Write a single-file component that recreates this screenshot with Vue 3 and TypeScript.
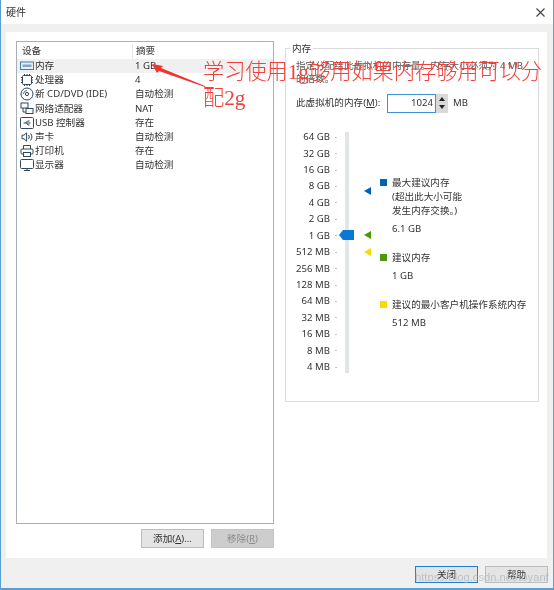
<script setup lang="ts">
interface Device { name: string; summary: string; icon: string; selected?: boolean }
const devices: Device[] = [
  { name: '内存', summary: '1 GB', icon: 'mem', selected: true },
  { name: '处理器', summary: '4', icon: 'cpu' },
  { name: '新 CD/DVD (IDE)', summary: '自动检测', icon: 'cd' },
  { name: '网络适配器', summary: 'NAT', icon: 'net' },
  { name: 'USB 控制器', summary: '存在', icon: 'usb' },
  { name: '声卡', summary: '自动检测', icon: 'snd' },
  { name: '打印机', summary: '存在', icon: 'prn' },
  { name: '显示器', summary: '自动检测', icon: 'mon' },
]
const scale: string[] = ['64 GB','32 GB','16 GB','8 GB','4 GB','2 GB','1 GB','512 MB','256 MB','128 MB','64 MB','32 MB','16 MB','8 MB','4 MB']
</script>

<template>
  <div class="win">
    <header class="title">
      <span>硬件</span>
      <svg class="close" viewBox="0 0 9 9" width="9" height="9"><path d="M.5.5l8 8M8.5.5l-8 8" stroke="#444" stroke-width="1.1" fill="none"/></svg>
    </header>
    <div class="sheet">
      <section class="list">
        <div class="row head"><span class="c1">设备</span><span class="c2">摘要</span></div>
        <div v-for="d in devices" :key="d.name" class="row" :class="{ sel: d.selected }">
          <span class="c1">
            <svg class="ic" viewBox="0 0 14 14" fill="none" stroke="#2f4a5e" stroke-width="1">
              <g v-if="d.icon === 'mem'"><rect x="0.5" y="3" width="13" height="7.5" stroke="#3f7fa8" fill="#e4eef5"/><path d="M2.5 5.5h9v2.5h-9z" fill="#7fa9c6" stroke="none"/></g>
              <g v-else-if="d.icon === 'cpu'"><rect x="2.5" y="2.5" width="9" height="9" rx="1"/><path d="M1 4.5h1.5M1 7h1.5M1 9.5h1.5M11.5 4.5H13M11.5 7H13M11.5 9.5H13M4.5 1v1.5M7 1v1.5M9.5 1v1.5M4.5 11.5V13M7 11.5V13M9.5 11.5V13"/></g>
              <g v-else-if="d.icon === 'cd'"><circle cx="7" cy="7" r="6"/><circle cx="7" cy="7" r="1.6"/><path d="M3.5 7a3.5 3.5 0 0 1 3.5-3.5" stroke-width=".8"/></g>
              <g v-else-if="d.icon === 'net'"><rect x="1" y="1" width="7" height="5"/><rect x="6" y="6.5" width="7" height="5"/><path d="M3 6v4h3"/></g>
              <g v-else-if="d.icon === 'usb'"><rect x="0.5" y="1.5" width="13" height="11" rx="1"/><path d="M3.5 7h7M5.5 7l2-2h2M6.5 7l1.5 2h1.5"/></g>
              <g v-else-if="d.icon === 'snd'"><path d="M2 5.2h2l2.6-2.4v8.4L4 8.8H2z"/><path d="M8.5 5a3 3 0 0 1 0 4M10.5 3.5a5 5 0 0 1 0 7"/></g>
              <g v-else-if="d.icon === 'prn'"><path d="M3.5 5V1.5h7V5"/><rect x="1" y="5" width="12" height="5" rx="1"/><rect x="3.5" y="8.5" width="7" height="4" fill="#fff"/></g>
              <g v-else><rect x="0.5" y="1.5" width="13" height="9" rx="1"/><path d="M4 12.5h6M7 10.5v2"/></g>
            </svg>
            <span>{{ d.name }}</span>
          </span>
          <span class="c2">{{ d.summary }}</span>
        </div>
        <div class="list-actions">
          <button class="btn">添加(<u>A</u>)...</button>
          <button class="btn off">移除(<u>R</u>)</button>
        </div>
      </section>

      <section class="group">
        <h3 class="legend-title">内存</h3>
        <p class="desc">指定分配给此虚拟机的内存量。内存大小必须为 4 MB<br>的倍数。</p>
        <div class="mem-line">
          <label>此虚拟机的内存(<u>M</u>):</label>
          <div class="spin">
            <span class="val">1024</span>
            <span class="arrows"><i class="up"></i><i class="down"></i></span>
          </div>
          <span>MB</span>
        </div>
        <div class="slider-area">
          <div class="scale">
            <div v-for="s in scale" :key="s" class="tick"><span>{{ s }}</span><b></b></div>
          </div>
          <div class="track">
            <svg class="thumb" viewBox="0 0 15 10"><path d="M0 5 4 0h11v10H4z" fill="#0a78d7"/></svg>
            <i class="tri blue"></i>
            <i class="tri green"></i>
            <i class="tri yellow"></i>
          </div>
          <div class="keys">
            <div class="key k1">
              <div class="key-t"><i class="sq s-blue"></i>最大建议内存</div>
              <div class="key-n">(超出此大小可能<br>发生内存交换。)</div>
              <div class="key-v">6.1 GB</div>
            </div>
            <div class="key k2">
              <div class="key-t"><i class="sq s-green"></i>建议内存</div>
              <div class="key-v">1 GB</div>
            </div>
            <div class="key k3">
              <div class="key-t"><i class="sq s-yellow"></i>建议的最小客户机操作系统内存</div>
              <div class="key-v">512 MB</div>
            </div>
          </div>
        </div>
      </section>
    </div>
    <footer class="foot">
      <button class="btn primary">关闭</button>
      <button class="btn">帮助</button>
    </footer>

    <svg class="arrow" viewBox="0 0 60 30" width="60" height="30">
      <path d="M4 3 15 5 13 7 57 25 57 26 11 10 9 12Z" fill="#f0332e"/>
    </svg>
    <div class="note">学习使用1g够用如果内存够用可以分配2g</div>
    <div class="mark">https://blog.csdn.net/toyanf</div>
  </div>
</template>

<style>
html, body { margin: 0; background: #fff; }
</style>

<style scoped>
.win {
  position: relative;
  box-sizing: border-box;
  width: 554px;
  height: 590px;
  overflow: hidden;
  display: flex;
  flex-direction: column;
  background: #f0f0f0;
  border: 1px solid #5a9fd4;
  border-top: 0;
  border-bottom-width: 2px;
  font: 9.6px/14px "Noto Sans", "Noto Sans CJK SC", sans-serif;
  color: #333;
  filter: blur(0.35px);
}
.title {
  height: 24px;
  line-height: 24px;
  background: #fff;
  padding: 0 8px 0 5px;
  font-size: 10px;
  flex: none;
  display: flex;
  justify-content: space-between;
  align-items: center;
}
.sheet {
  flex: none;
  height: 526px;
  margin: 8px 6px 0 5px;
  box-sizing: border-box;
  background: #fff;
  padding: 9px 10px 0 10px;
  display: flex;
  align-items: flex-start;
}
.list {
  position: relative;
  box-sizing: border-box;
  width: 258px;
  height: 483px;
  border: 1px solid #a9b0b5;
  padding-top: 1px;
  flex: none;
}
.row { display: flex; height: 14.2px; line-height: 14px; align-items: center; }
.row.head { height: 16px; color: #333; }
.row.sel { background: #f0f0f0; }
.c1 { width: 112px; padding-left: 3px; display: flex; align-items: center; gap: 1px; white-space: nowrap; flex: none; }
.head .c1 { padding-left: 5px; width: 110px; border-right: 1px solid #e8e8e8; height: 15px; }
.c2 { padding-left: 3px; }
.ic { width: 14px; height: 14px; flex: none; }
.list-actions {
  position: absolute;
  top: 487px;
  right: -1px;
  display: flex;
  gap: 7px;
}
.btn {
  box-sizing: border-box;
  width: 63px;
  height: 19px;
  padding: 0;
  border: 1px solid #bdbdbd;
  background: #e4e4e4;
  font: inherit;
  color: #333;
}
.btn.off { background: #cdcdcd; color: #8b8b8b; border-color: #c4c4c4; }
.btn.primary { border: 1px solid #1f7fd0; }
.group {
  position: relative;
  box-sizing: border-box;
  width: 254px;
  height: 354px;
  margin: 7px 0 0 11px;
  border: 1px solid #dcdcdc;
  padding: 10px 10px 0;
  flex: none;
}
.legend-title {
  position: absolute;
  top: -7px;
  left: 4px;
  margin: 0;
  padding: 0 2px;
  background: #fff;
  font: inherit;
}
.desc { margin: 0; line-height: 13px; color: #555; }
.mem-line { display: flex; align-items: center; margin-top: 8px; height: 20px; }
.mem-line label { width: 91px; flex: none; }
.spin { display: flex; width: 61px; height: 19px; margin-right: 5px; }
.val {
  box-sizing: border-box;
  width: 49px;
  border: 1px solid #3d93d6;
  text-align: right;
  padding-right: 2px;
  line-height: 16px;
}
.arrows { width: 12px; display: flex; flex-direction: column; background: #d9d9d9; align-items: center; justify-content: space-around; padding: 2px 0; box-sizing: border-box; }
.arrows i { width: 0; height: 0; border-left: 3px solid transparent; border-right: 3px solid transparent; }
.up { border-bottom: 4px solid #222; }
.down { border-top: 4px solid #222; }
.slider-area { display: flex; margin-top: 16px; }
.scale { width: 34px; flex: none; }
.tick { height: 16.43px; display: flex; align-items: center; justify-content: flex-end; white-space: nowrap; position: relative; }
.tick b { position: absolute; right: -7px; width: 2px; height: 1px; background: #c4c4c4; }
.track { position: relative; margin-left: 15px; width: 4px; height: 241px; background: #e2e5e5; flex: none; top: 3px; }
.thumb { position: absolute; left: -6px; top: 98px; width: 15px; height: 10px; }
.tri { position: absolute; width: 0; height: 0; border-top: 4px solid transparent; border-bottom: 4px solid transparent; border-right: 7px solid; left: 19px; }
.tri.blue { top: 55px; border-right-color: #0063b1; }
.tri.green { top: 99px; border-right-color: #4a9a08; }
.tri.yellow { top: 116px; border-right-color: #ffd800; }
.keys { margin-left: 31px; margin-top: 47px; }
.key { position: relative; padding-left: 12px; white-space: nowrap; }
.key-t { line-height: 14px; }
.sq { position: absolute; left: 0; top: 3px; width: 7px; height: 7px; }
.s-blue { background: #0063b1; }
.s-green { background: #4a9a08; }
.s-yellow { background: #ffd800; }
.key-n { margin-top: 0; line-height: 14px; }
.key-v { margin-top: 4px; line-height: 14px; }
.k2 { margin-top: 15px; }
.k3 { margin-top: 15px; }
.foot { flex: 1; display: flex; justify-content: flex-end; gap: 7px; padding: 8px 5px 0 0; }
.foot .btn { width: 63px; height: 17px; }
.arrow { position: absolute; left: 147px; top: 61px; }
.note {
  position: absolute;
  left: 202px;
  top: 59px;
  width: 345px;
  font: 21.2px/26px "Liberation Serif", "Noto Sans CJK SC", serif;
  font-weight: 300;
  color: #f0413a;
}
.mark {
  position: absolute;
  left: 414px;
  top: 570px;
  font: 11.2px/14px "Liberation Sans", sans-serif;
  color: rgba(170, 180, 195, 0.7);
  white-space: nowrap;
}
</style>
